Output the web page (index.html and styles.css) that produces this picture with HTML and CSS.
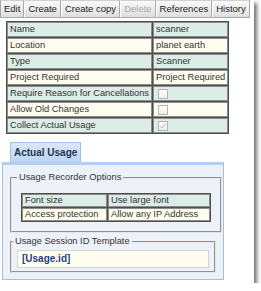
FILE: index.html
```html
<!DOCTYPE html>
<html lang="en">
<head>
<meta charset="UTF-8">
<title>Resource: scanner</title>
<link rel="stylesheet" href="styles.css">
</head>
<body>
<div class="window">
  <div class="toolbar">
    <span class="btn">Edit</span>
    <span class="btn">Create</span>
    <span class="btn">Create copy</span>
    <span class="btn disabled">Delete</span>
    <span class="btn">References</span>
    <span class="btn">History</span>
  </div>

  <table class="props">
    <tr class="alt"><td class="label">Name</td><td>scanner</td></tr>
    <tr><td class="label">Location</td><td>planet earth</td></tr>
    <tr class="alt"><td class="label">Type</td><td>Scanner</td></tr>
    <tr><td class="label">Project Required</td><td>Project Required</td></tr>
    <tr class="alt"><td class="label">Require Reason for Cancellations</td><td><span class="check"></span></td></tr>
    <tr><td class="label">Allow Old Changes</td><td><span class="check"></span></td></tr>
    <tr class="alt"><td class="label">Collect Actual Usage</td><td><span class="check checked"><svg width="8" height="8" viewBox="0 0 8 8"><path d="M1.5 4.2 L3.2 6 L6.6 1.5" fill="none" stroke="#b8b8b8" stroke-width="1"/></svg></span></td></tr>
  </table>

  <div class="tabs">
    <span class="tab active">Actual Usage</span>
  </div>
  <div class="panel">
    <fieldset class="group">
      <legend>Usage Recorder Options</legend>
      <table class="opts">
        <tr class="alt"><td class="opt-name">Font size</td><td>Use large font</td></tr>
        <tr><td class="opt-name">Access protection</td><td>Allow any IP Address</td></tr>
      </table>
    </fieldset>
    <fieldset class="group template">
      <legend>Usage Session ID Template</legend>
      <div class="field">[Usage.id]</div>
    </fieldset>
  </div>
</div>
</body>
</html>
```

FILE: styles.css
```css
:root{
  --text:#333;
  --row-alt:#dcece7;
  --row:#fffdf0;
  --grid:#4e4e4e;
  --blue-border:#9cc0ea;
  --panel-bg:#edf1f8;
}
body{margin:0;background:#fff;font-family:'Liberation Sans',Arial,sans-serif;font-size:9.3px;color:var(--text);}
.window{width:254px;height:283px;background:#fff;box-shadow:3px 3px 4px rgba(0,0,0,0.55);overflow:hidden;}

.toolbar{display:flex;height:18px;font-size:9.5px;}
.btn{padding:0 3px;border:1px solid #a9a9a9;border-top-color:#d0d0d0;line-height:16px;background:linear-gradient(#fafafa,#dedede);white-space:nowrap;color:#222;}
.btn + .btn{border-left-color:#fff;}
.btn.disabled{color:#aaa;}

.props{margin:3px 0 0 6px;width:222px;border-collapse:separate;border-spacing:1px;background:var(--grid);}
.props td{padding:0 2px;border:1px solid #8c8c8c;line-height:13px;height:13px;background:var(--row);white-space:nowrap;}
.props .alt td{background:var(--row-alt);}
.props .label{width:139px;}
.check{display:inline-block;width:8px;height:8px;margin:2px 0 0 2px;border:1px solid #b4b4b4;background:linear-gradient(#fff,#eee);vertical-align:top;position:relative;}
.check svg{position:absolute;left:0;top:0;}

.tabs{display:flex;margin:8px 0 0 10px;}
.tab{padding:0 3px;border:1px solid var(--blue-border);border-bottom:none;line-height:19px;font-size:10px;font-weight:bold;color:#1c3553;background:linear-gradient(#dbe8f8,#bcd4f3);}

.panel{margin-left:2px;width:206px;padding:7px 7px 6px;border:1px solid var(--blue-border);border-top:3px solid #b3cff3;background:var(--panel-bg);}

.group{margin:0;padding:10px 9px 9px;border:2px groove #e6e6e6;}
.group legend{margin-left:-4px;padding:0 2px;line-height:11px;color:#333;}
.group.template{margin-top:3px;padding:3px 5px;}

.opts{width:190px;border-collapse:separate;border-spacing:1px;background:var(--grid);}
.opts td{padding:0 2px;border:1px solid #8c8c8c;line-height:11px;background:var(--row);white-space:nowrap;}
.opts .alt td{background:var(--row-alt);}
.opts .opt-name{width:79px;}

.field{width:184px;height:16px;padding:0 2px 0 4px;border:1px solid #d4d4d4;background:var(--row);line-height:16px;font-size:10px;font-weight:bold;color:#1f3f7f;}
```
